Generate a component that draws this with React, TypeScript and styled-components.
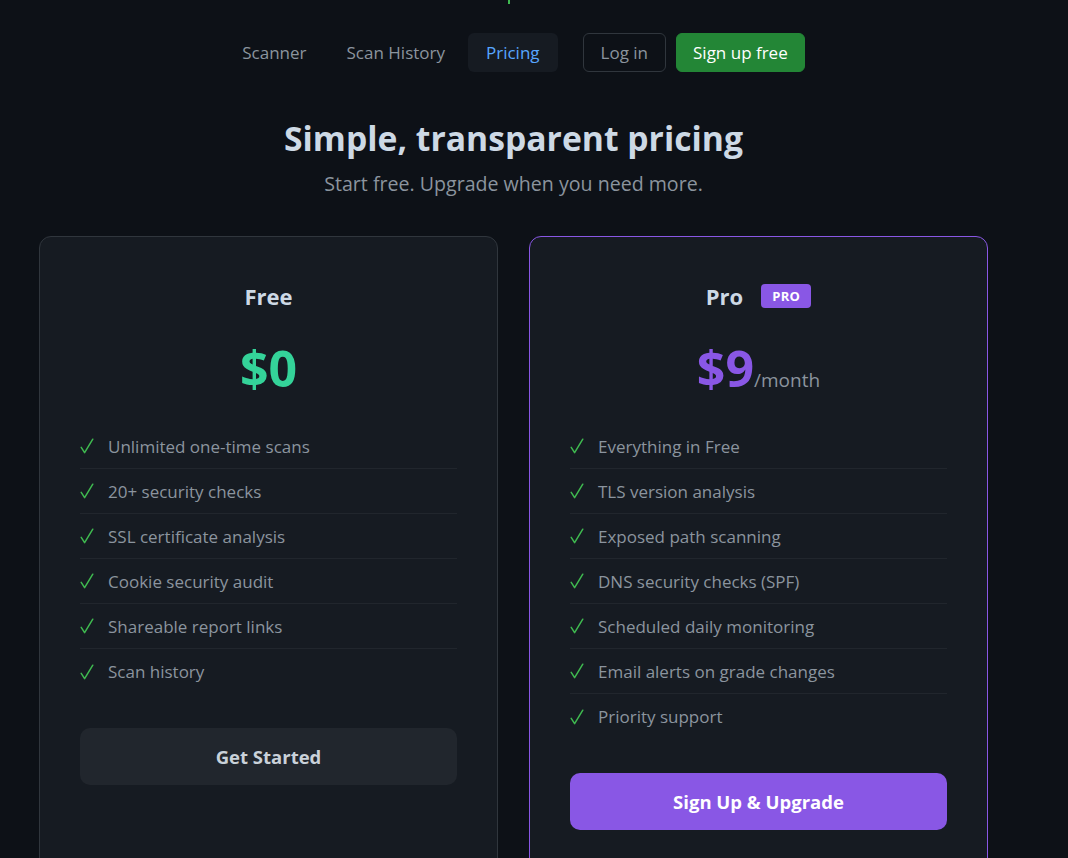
import React from "react";
import styled, { createGlobalStyle } from "styled-components";

const Global = createGlobalStyle`
  html, body { margin: 0; padding: 0; background: #0d1117; }
  body { font-family: "Open Sans", "Noto Sans", sans-serif; color: #c9d1d9; }
  * { box-sizing: border-box; }
`;

const Page = styled.div`
  width: 949px;
  margin-left: 39px;
  min-height: 858px;
  display: flex;
  flex-direction: column;
  align-items: center;
`;

const TopMark = styled.div`
  align-self: flex-start;
  margin-left: 469px;
  width: 2px;
  height: 4px;
  background: #3fb950;
`;

const Nav = styled.nav`
  margin-top: 29px;
  margin-left: 3px;
  display: flex;
  align-items: center;
  gap: 6px;
`;

const NavLink = styled.a<{ $active?: boolean }>`
  display: flex;
  align-items: center;
  height: 39px;
  padding: 0 ${(p) => (p.$active ? "18px" : "17px")};
  border-radius: 6px;
  font-size: 17px;
  color: ${(p) => (p.$active ? "#58a6ff" : "#8b949e")};
  background: ${(p) => (p.$active ? "#161b22" : "transparent")};
  text-decoration: none;
`;

const NavButton = styled.a<{ $primary?: boolean }>`
  display: flex;
  align-items: center;
  height: 39px;
  padding: 0 ${(p) => (p.$primary ? "16px" : "17px")};
  margin-left: ${(p) => (p.$primary ? "4px" : "0")};
  border-radius: 6px;
  font-size: 17px;
  text-decoration: none;
  color: ${(p) => (p.$primary ? "#ffffff" : "#8b949e")};
  background: ${(p) => (p.$primary ? "#238636" : "transparent")};
  border: 1px solid ${(p) => (p.$primary ? "#238636" : "#30363d")};
`;

const Divider = styled.span`
  width: 13px;
`;

const Title = styled.h1`
  margin: 44px 0 0;
  font-size: 33.7px;
  font-weight: 700;
  color: #cdd9e5;
  line-height: 44px;
`;

const Subtitle = styled.p`
  margin: 10px 0 0;
  font-size: 19.6px;
  color: #8b949e;
  line-height: 28px;
`;

const Cards = styled.div`
  margin-top: 38px;
  width: 100%;
  display: grid;
  grid-template-columns: 1fr 1fr;
  gap: 31px;
  align-items: start;
`;

const Card = styled.section<{ $featured?: boolean }>`
  background: #161b22;
  border: 1px solid ${(p) => (p.$featured ? "#8957e5" : "#30363d")};
  border-radius: 12px;
  padding: 44px 40px 60px;
  display: flex;
  flex-direction: column;
  min-height: 660px;
`;

const PlanHead = styled.div`
  display: flex;
  align-items: center;
  justify-content: center;
  gap: 18px;
  height: 30px;
`;

const PlanName = styled.h2`
  margin: 0;
  font-size: 22px;
  font-weight: 700;
  color: #cdd9e5;
`;

const Badge = styled.span`
  display: inline-flex;
  align-items: center;
  justify-content: center;
  width: 50px;
  height: 24px;
  border-radius: 4px;
  background: #8957e5;
  color: #ffffff;
  font-size: 13px;
  font-weight: 700;
  letter-spacing: 0.3px;
`;

const PriceRow = styled.div`
  margin-top: 24px;
  display: flex;
  align-items: baseline;
  justify-content: center;
  height: 66px;
`;

const Price = styled.span<{ $color: string }>`
  font-size: 50px;
  font-weight: 700;
  color: ${(p) => p.$color};
  line-height: 66px;
`;

const Period = styled.span`
  font-size: 19px;
  color: #8b949e;
`;

const Features = styled.ul`
  list-style: none;
  margin: 23px 0 0;
  padding: 0;
`;

const Feature = styled.li`
  display: flex;
  align-items: center;
  height: 45px;
  border-bottom: 1px solid #21262d;
  font-size: 17px;
  color: #8b949e;
  &:last-child { border-bottom: none; }
`;

const CheckIcon = styled.svg`
  width: 14px;
  height: 16px;
  margin-right: 14px;
  flex-shrink: 0;
`;

const CTA = styled.button<{ $primary?: boolean }>`
  margin-top: 34px;
  height: 57px;
  width: 100%;
  border: none;
  border-radius: 10px;
  font-family: inherit;
  font-size: 18.5px;
  font-weight: 700;
  cursor: pointer;
  color: ${(p) => (p.$primary ? "#ffffff" : "#c9d1d9")};
  background: ${(p) => (p.$primary ? "#8957e5" : "#21262d")};
`;

const Check = () => (
  <CheckIcon viewBox="0 0 14 16" aria-hidden="true">
    <path
      d="M1.2 9.4 L4.6 14.6 L12.8 1.2"
      fill="none"
      stroke="#3fb950"
      strokeWidth="1.5"
      strokeLinecap="round"
      strokeLinejoin="round"
    />
  </CheckIcon>
);

const free = [
  "Unlimited one-time scans",
  "20+ security checks",
  "SSL certificate analysis",
  "Cookie security audit",
  "Shareable report links",
  "Scan history",
];

const pro = [
  "Everything in Free",
  "TLS version analysis",
  "Exposed path scanning",
  "DNS security checks (SPF)",
  "Scheduled daily monitoring",
  "Email alerts on grade changes",
  "Priority support",
];

export default function App() {
  return (
    <>
      <Global />
      <Page>
        <TopMark />
        <Nav>
          <NavLink>Scanner</NavLink>
          <NavLink>Scan History</NavLink>
          <NavLink $active>Pricing</NavLink>
          <Divider />
          <NavButton>Log in</NavButton>
          <NavButton $primary>Sign up free</NavButton>
        </Nav>
        <Title>Simple, transparent pricing</Title>
        <Subtitle>Start free. Upgrade when you need more.</Subtitle>
        <Cards>
          <Card>
            <PlanHead>
              <PlanName>Free</PlanName>
            </PlanHead>
            <PriceRow>
              <Price $color="#34d399">$0</Price>
            </PriceRow>
            <Features>
              {free.map((f) => (
                <Feature key={f}>
                  <Check />
                  {f}
                </Feature>
              ))}
            </Features>
            <CTA>Get Started</CTA>
          </Card>
          <Card $featured>
            <PlanHead>
              <PlanName>Pro</PlanName>
              <Badge>PRO</Badge>
            </PlanHead>
            <PriceRow>
              <Price $color="#8957e5">$9</Price>
              <Period>/month</Period>
            </PriceRow>
            <Features>
              {pro.map((f) => (
                <Feature key={f}>
                  <Check />
                  {f}
                </Feature>
              ))}
            </Features>
            <CTA $primary>Sign Up &amp; Upgrade</CTA>
          </Card>
        </Cards>
      </Page>
    </>
  );
}
